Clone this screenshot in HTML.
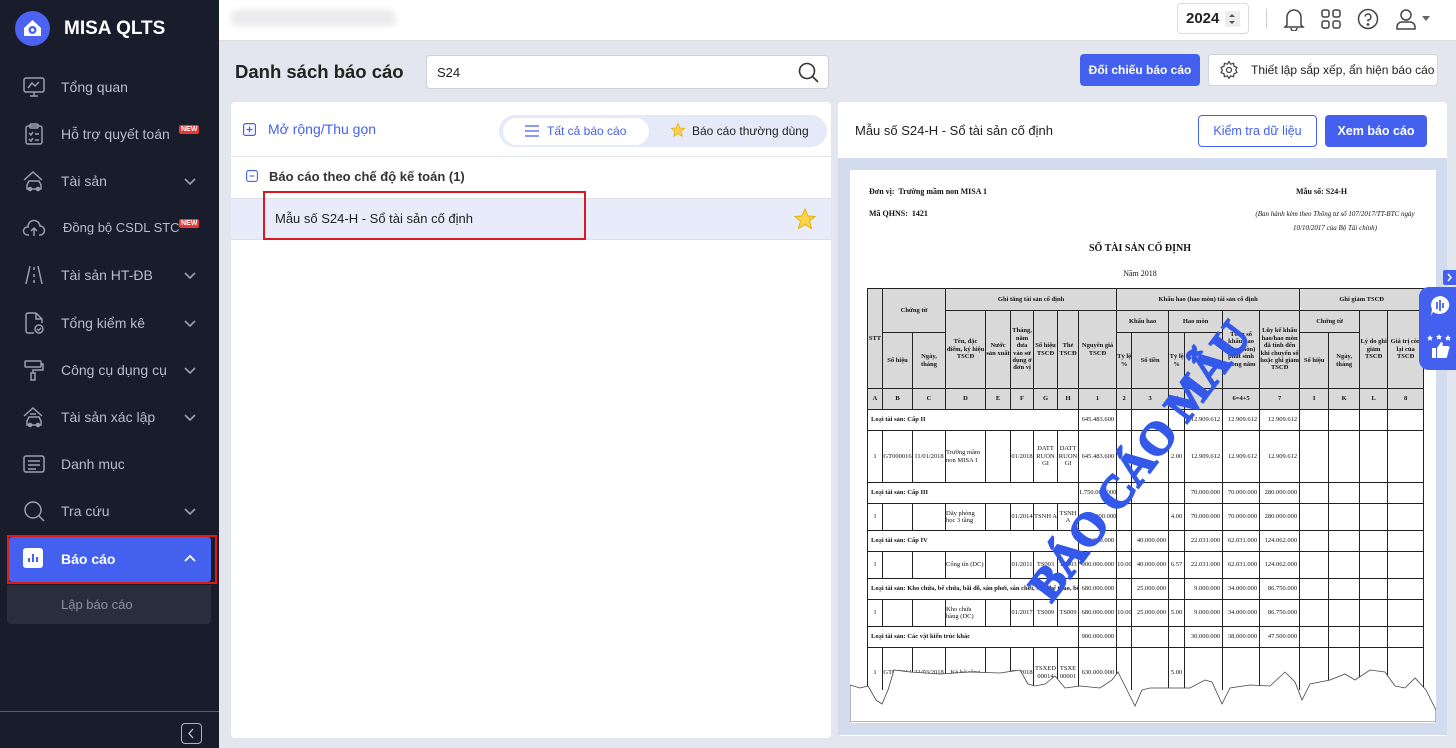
<!DOCTYPE html>
<html><head><meta charset="utf-8">
<style>
*{box-sizing:border-box;margin:0;padding:0}
body{width:1456px;height:748px;overflow:hidden;background:#e3e6ee;font-family:"Liberation Sans",sans-serif;position:relative}
.abs{position:absolute}
#side{left:0;top:0;width:219px;height:748px;background:#181c2b}
.mi{position:absolute;left:0;width:219px;height:40px;color:#b9bdc7;font-size:14px}
.mi .t{position:absolute;left:61px;top:12px;white-space:nowrap}
.mi svg.ic{position:absolute;left:22px;top:8px}
.mi .ch{position:absolute;left:184px;top:14px}
.new{position:absolute;background:#e5393b;color:#fff;font-size:7px;font-weight:bold;padding:1px 2px;border-radius:2px}
#top{left:219px;top:0;width:1237px;height:41px;background:#fff;border-bottom:1px solid #e0e0e0}
.btn{position:absolute;font-size:13px;border-radius:4px;text-align:center;white-space:nowrap}
.doc{font-family:"Liberation Serif",serif;color:#111}
table.d{border-collapse:collapse;table-layout:fixed;font-family:"Liberation Serif",serif;font-size:6.5px;color:#111}
table.d td{border:1px solid #222;text-align:center;vertical-align:middle;line-height:1.15;overflow:hidden;padding:0}
table.d tr.h td{background:#d9d9d9;font-weight:bold}
table.d td.l{text-align:left;padding-left:3px;font-weight:bold;white-space:nowrap}
table.d td.r{text-align:right;padding-right:2px}
</style></head><body>

<!-- SIDEBAR -->
<div id="side" class="abs">
  <div class="abs" style="left:15px;top:11px;width:35px;height:35px;border-radius:50%;background:#4b63f0"></div>
  <svg class="abs" style="left:15px;top:11px" width="35" height="35" viewBox="0 0 35 35"><path d="M9 17 L17.5 9 L26 17 V25 H9 Z" fill="#fff"/><circle cx="17.5" cy="19" r="4" fill="#4b63f0"/><circle cx="17.5" cy="19" r="1.6" fill="#fff"/></svg>
  <div class="abs" style="left:64px;top:18px;color:#fff;font-weight:bold;font-size:19px">MISA QLTS</div>

  <div class="mi" style="top:67px"><svg class="ic" width="24" height="24" viewBox="0 0 24 24" fill="none" stroke="#9ba0ab" stroke-width="1.5"><rect x="2" y="3" width="20" height="14" rx="2"/><path d="M6 13 L10 8 L13 11 L17 7 M12 17 V21 M8 21 H16"/></svg><span class="t">Tổng quan</span></div>
  <div class="mi" style="top:114px"><svg class="ic" width="24" height="24" viewBox="0 0 24 24" fill="none" stroke="#9ba0ab" stroke-width="1.5"><rect x="4" y="4" width="16" height="18" rx="2"/><rect x="8" y="2" width="8" height="4" rx="1"/><path d="M7 11 L9 13 L11 10 M13 12 H17 M7 17 L9 19 L11 16 M13 18 H17"/></svg><span class="t">Hỗ trợ quyết toán</span><span class="new" style="left:179px;top:11px">NEW</span></div>
  <div class="mi" style="top:161px"><svg class="ic" width="24" height="24" viewBox="0 0 24 24" fill="none" stroke="#9ba0ab" stroke-width="1.5"><path d="M2 11 L11 3 L20 11 M5 16 L7 12 H17 L19 16 V20 H5 Z"/><circle cx="8" cy="20" r="1.5"/><circle cx="16" cy="20" r="1.5"/></svg><span class="t">Tài sản</span><svg class="ch" width="12" height="12" viewBox="0 0 12 12"><path d="M1 4 L6 9 L11 4" fill="none" stroke="#9ba0ab" stroke-width="1.6"/></svg></div>
  <div class="mi" style="top:208px"><svg class="ic" width="24" height="24" viewBox="0 0 24 24" fill="none" stroke="#9ba0ab" stroke-width="1.5"><path d="M7 19 H5 A4 4 0 0 1 6 11 A6 6 0 0 1 18 10 A4.5 4.5 0 0 1 18 19 H17 M12 20 V12 M9 15 L12 12 L15 15"/></svg><span class="t" style="left:63px;font-size:13px">Đồng bộ CSDL STC</span><span class="new" style="left:179px;top:11px">NEW</span></div>
  <div class="mi" style="top:255px"><svg class="ic" width="24" height="24" viewBox="0 0 24 24" fill="none" stroke="#9ba0ab" stroke-width="1.5"><path d="M8 3 L4 21 M16 3 L20 21 M12 4 V7 M12 11 V14 M12 17 V20"/></svg><span class="t">Tài sản HT-ĐB</span><svg class="ch" width="12" height="12" viewBox="0 0 12 12"><path d="M1 4 L6 9 L11 4" fill="none" stroke="#9ba0ab" stroke-width="1.6"/></svg></div>
  <div class="mi" style="top:303px"><svg class="ic" width="24" height="24" viewBox="0 0 24 24" fill="none" stroke="#9ba0ab" stroke-width="1.5"><path d="M14 2 H6 A2 2 0 0 0 4 4 V20 A2 2 0 0 0 6 22 H12 M14 2 L20 8 V12 M14 2 V8 H20"/><circle cx="17" cy="18" r="4"/><path d="M15 18 L16.5 19.5 L19 17"/></svg><span class="t">Tổng kiểm kê</span><svg class="ch" width="12" height="12" viewBox="0 0 12 12"><path d="M1 4 L6 9 L11 4" fill="none" stroke="#9ba0ab" stroke-width="1.6"/></svg></div>
  <div class="mi" style="top:350px"><svg class="ic" width="24" height="24" viewBox="0 0 24 24" fill="none" stroke="#9ba0ab" stroke-width="1.5"><rect x="3" y="3" width="16" height="6" rx="1"/><path d="M19 6 H21 V12 H11 V15 M9 15 H13 V22 H9 Z"/></svg><span class="t">Công cụ dụng cụ</span><svg class="ch" width="12" height="12" viewBox="0 0 12 12"><path d="M1 4 L6 9 L11 4" fill="none" stroke="#9ba0ab" stroke-width="1.6"/></svg></div>
  <div class="mi" style="top:397px"><svg class="ic" width="24" height="24" viewBox="0 0 24 24" fill="none" stroke="#9ba0ab" stroke-width="1.5"><path d="M2 11 L11 3 L20 11 M5 16 L7 12 H17 L19 16 V20 H5 Z M8 9 H14"/><circle cx="8" cy="20" r="1.5"/><circle cx="16" cy="20" r="1.5"/></svg><span class="t">Tài sản xác lập</span><svg class="ch" width="12" height="12" viewBox="0 0 12 12"><path d="M1 4 L6 9 L11 4" fill="none" stroke="#9ba0ab" stroke-width="1.6"/></svg></div>
  <div class="mi" style="top:444px"><svg class="ic" width="24" height="24" viewBox="0 0 24 24" fill="none" stroke="#9ba0ab" stroke-width="1.5"><rect x="2" y="4" width="20" height="16" rx="2"/><path d="M6 9 H18 M6 13 H18 M6 17 H14"/></svg><span class="t">Danh mục</span></div>
  <div class="mi" style="top:491px"><svg class="ic" width="24" height="24" viewBox="0 0 24 24" fill="none" stroke="#9ba0ab" stroke-width="1.5"><circle cx="11" cy="11" r="8"/><path d="M17 17 L22 22"/></svg><span class="t">Tra cứu</span><svg class="ch" width="12" height="12" viewBox="0 0 12 12"><path d="M1 4 L6 9 L11 4" fill="none" stroke="#9ba0ab" stroke-width="1.6"/></svg></div>

  <div class="abs" style="left:7px;top:535px;width:210px;height:49px;border:2px solid #e0191f"></div>
  <div class="abs" style="left:9px;top:537px;width:202px;height:45px;background:#4361ee;border-radius:3px"></div>
  <svg class="abs" style="left:23px;top:548px" width="20" height="20" viewBox="0 0 20 20"><rect width="20" height="20" rx="3" fill="#fff"/><path d="M6 14 V10 M10 14 V6 M14 14 V9" stroke="#4361ee" stroke-width="2"/></svg>
  <div class="abs" style="left:61px;top:551px;color:#fff;font-weight:bold;font-size:14px">Báo cáo</div>
  <svg class="abs" style="left:184px;top:553px" width="12" height="12" viewBox="0 0 12 12"><path d="M1 8 L6 3 L11 8" fill="none" stroke="#fff" stroke-width="1.8"/></svg>
  <div class="abs" style="left:7px;top:585px;width:204px;height:39px;background:#2a2e3c;border-radius:0 0 4px 4px"></div>
  <div class="abs" style="left:61px;top:597px;color:#8d929c;font-size:13px">Lập báo cáo</div>
  <div class="abs" style="left:0;top:711px;width:219px;height:1px;background:#5a5e69"></div>
  <div class="abs" style="left:181px;top:723px;width:21px;height:21px;border:1.5px solid #b0b3ba;border-radius:4px"></div>
  <svg class="abs" style="left:181px;top:723px" width="21" height="21" viewBox="0 0 21 21"><path d="M12 6 L8 10.5 L12 15" fill="none" stroke="#c8cad0" stroke-width="1.3"/></svg>
</div>

<!-- TOP BAR -->
<div id="top" class="abs">
  <div class="abs" style="left:12px;top:10px;width:165px;height:16px;background:#ebebed;border-radius:6px;filter:blur(3px)"></div>
  <div class="abs" style="left:958px;top:3px;width:72px;height:31px;border:1px solid #dcdcdc;border-radius:4px"></div>
  <div class="abs" style="left:967px;top:10px;font-size:15px;font-weight:bold;color:#222">2024</div>
  <div class="abs" style="left:1006px;top:11px;width:15px;height:16px;background:#eee"></div>
  <svg class="abs" style="left:1008px;top:12px" width="10" height="14" viewBox="0 0 10 14"><path d="M2 5 L5 2 L8 5 Z M2 9 L5 12 L8 9 Z" fill="#555"/></svg>
  <div class="abs" style="left:1047px;top:9px;width:1px;height:20px;background:#ccc"></div>
  <svg class="abs" style="left:1064px;top:7px" width="22" height="24" viewBox="0 0 22 24" fill="none" stroke="#444" stroke-width="1.5"><path d="M4 18 V10 A7 7 0 0 1 18 10 V18 L20 20 H2 Z M8 21 A3 3 0 0 0 14 21"/></svg>
  <svg class="abs" style="left:1101px;top:8px" width="22" height="22" viewBox="0 0 22 22" fill="none" stroke="#444" stroke-width="1.5"><rect x="2" y="2" width="7" height="7" rx="2"/><rect x="13" y="2" width="7" height="7" rx="2"/><rect x="2" y="13" width="7" height="7" rx="2"/><rect x="13" y="13" width="7" height="7" rx="2"/></svg>
  <svg class="abs" style="left:1138px;top:8px" width="22" height="22" viewBox="0 0 22 22" fill="none" stroke="#444" stroke-width="1.5"><circle cx="11" cy="11" r="9.5"/><path d="M8 8.5 A3 3 0 1 1 11 12 V13.5"/><circle cx="11" cy="16.5" r=".6" fill="#444"/></svg>
  <svg class="abs" style="left:1176px;top:8px" width="22" height="22" viewBox="0 0 22 22" fill="none" stroke="#444" stroke-width="1.5"><circle cx="11" cy="7" r="5"/><path d="M2 21 V19 A5 5 0 0 1 7 14 H15 A5 5 0 0 1 20 19 V21 Z"/></svg>
  <svg class="abs" style="left:1203px;top:16px" width="8" height="5" viewBox="0 0 8 5"><path d="M0 0 H8 L4 5 Z" fill="#666"/></svg>
</div>

<!-- TITLE ROW -->
<div class="abs" style="left:235px;top:61px;font-size:18.5px;font-weight:bold;color:#222">Danh sách báo cáo</div>
<div class="abs" style="left:426px;top:55px;width:403px;height:34px;background:#fff;border:1px solid #cfd2d9;border-radius:4px"></div>
<div class="abs" style="left:437px;top:65px;font-size:13px;color:#222">S24</div>
<svg class="abs" style="left:798px;top:62px" width="21" height="21" viewBox="0 0 21 21" fill="none" stroke="#333" stroke-width="1.6"><circle cx="9" cy="9" r="7.5"/><path d="M14.5 14.5 L20 20"/></svg>
<div class="btn" style="left:1080px;top:54px;width:120px;height:32px;background:#4361ee;color:#fff;line-height:32px;font-size:12px;font-weight:bold">Đối chiếu báo cáo</div>
<div class="btn" style="left:1208px;top:54px;width:230px;height:32px;background:#fff;border:1px solid #d3d6dc;color:#222;line-height:30px;font-size:12px;text-align:left;padding-left:42px">Thiết lập sắp xếp, ẩn hiện báo cáo</div>
<svg class="abs" style="left:1219px;top:60px" width="20" height="20" viewBox="0 0 24 24" fill="none" stroke="#444" stroke-width="1.5"><circle cx="12" cy="12" r="3"/><path d="M12 2 L14 5 L17.5 4 L18 7.5 L21.5 9 L20 12 L21.5 15 L18 16.5 L17.5 20 L14 19 L12 22 L10 19 L6.5 20 L6 16.5 L2.5 15 L4 12 L2.5 9 L6 7.5 L6.5 4 L10 5 Z"/></svg>

<!-- LEFT PANEL -->
<div class="abs" style="left:231px;top:102px;width:600px;height:636px;background:#fff;border-radius:4px"></div>
<svg class="abs" style="left:243px;top:123px" width="13" height="13" viewBox="0 0 13 13" fill="none" stroke="#4361ee" stroke-width="1.2"><rect x=".6" y=".6" width="11.8" height="11.8" rx="2"/><path d="M3.5 6.5 H9.5 M6.5 3.5 V9.5"/></svg>
<div class="abs" style="left:268px;top:121px;font-size:14px;color:#4361ee">Mở rộng/Thu gọn</div>
<div class="abs" style="left:499px;top:115px;width:328px;height:32px;background:#e6e9f8;border-radius:16px"></div>
<div class="abs" style="left:503px;top:118px;width:146px;height:27px;background:#fff;border-radius:14px"></div>
<svg class="abs" style="left:525px;top:125px" width="14" height="12" viewBox="0 0 14 12" stroke="#4361ee" stroke-width="1.3"><path d="M0 1 H14 M0 6 H14 M0 11 H14"/></svg>
<div class="abs" style="left:547px;top:124px;font-size:12px;color:#4361ee">Tất cả báo cáo</div>
<svg class="abs" style="left:670px;top:122px" width="16" height="16" viewBox="0 0 24 24"><path d="M12 2 L15 9 L22 9.5 L16.5 14 L18.5 21.5 L12 17.5 L5.5 21.5 L7.5 14 L2 9.5 L9 9 Z" fill="#fcd34d" stroke="#e5a800" stroke-width="1"/></svg>
<div class="abs" style="left:692px;top:124px;font-size:12px;color:#222">Báo cáo thường dùng</div>
<div class="abs" style="left:231px;top:156px;width:600px;height:1px;background:#e3e4e8"></div>
<svg class="abs" style="left:246px;top:170px" width="12" height="12" viewBox="0 0 12 12" fill="none" stroke="#4361ee" stroke-width="1.1"><rect x=".6" y=".6" width="10.8" height="10.8" rx="2"/><path d="M3.5 6 H8.5"/></svg>
<div class="abs" style="left:269px;top:169px;font-size:13px;font-weight:bold;color:#333">Báo cáo theo chế độ kế toán (1)</div>
<div class="abs" style="left:231px;top:198px;width:600px;height:42px;background:#e8ebfa;border-top:1px solid #dcdfe8;border-bottom:1px solid #dcdfe8"></div>
<div class="abs" style="left:263px;top:191px;width:323px;height:49px;border:2px solid #d9191f"></div>
<div class="abs" style="left:275px;top:211px;font-size:13px;color:#222">Mẫu số S24-H - Sổ tài sản cố định</div>
<svg class="abs" style="left:793px;top:207px" width="24" height="24" viewBox="0 0 24 24"><path d="M12 2 L15 9 L22 9.5 L16.5 14 L18.5 21.5 L12 17.5 L5.5 21.5 L7.5 14 L2 9.5 L9 9 Z" fill="#fcd34d" stroke="#e5b000" stroke-width="1"/></svg>

<!-- RIGHT PANEL -->
<div class="abs" style="left:838px;top:102px;width:609px;height:634px;background:#fff;border-radius:4px"></div>
<div class="abs" style="left:855px;top:123px;font-size:13px;color:#222">Mẫu số S24-H - Sổ tài sản cố định</div>
<div class="btn" style="left:1198px;top:115px;width:119px;height:32px;border:1px solid #4361ee;color:#4361ee;line-height:30px;font-size:12.5px">Kiểm tra dữ liệu</div>
<div class="btn" style="left:1325px;top:115px;width:102px;height:32px;background:#4361ee;color:#fff;line-height:32px;font-size:12.5px;font-weight:bold">Xem báo cáo</div>
<div class="abs" style="left:838px;top:158px;width:609px;height:577px;background:#d3dbee"></div>
<div class="abs" style="left:850px;top:170px;width:586px;height:553px;background:#fff"></div>

<div class="abs doc" style="left:869px;top:187px;font-size:8px;font-weight:bold">Đơn vị:&nbsp; Trường mầm non MISA 1</div>
<div class="abs doc" style="left:869px;top:209px;font-size:8px;font-weight:bold">Mã QHNS:&nbsp; 1421</div>
<div class="abs doc" style="left:1296px;top:187px;font-size:8px;font-weight:bold">Mẫu số: S24-H</div>
<div class="abs doc" style="left:1250px;top:207px;width:170px;font-size:7px;font-style:italic;text-align:center;line-height:14px">(Ban hành kèm theo Thông tư số 107/2017/TT-BTC ngày 10/10/2017 của Bộ Tài chính)</div>
<div class="abs doc" style="left:1040px;top:243px;width:200px;text-align:center;font-size:10px;font-weight:bold">SỔ TÀI SẢN CỐ ĐỊNH</div>
<div class="abs doc" style="left:1090px;top:269px;width:100px;text-align:center;font-size:8px">Năm 2018</div>

<div class="abs" style="left:867px;top:288px;width:557px;height:402px;overflow:hidden">
<table class="d" style="width:556px">
<colgroup><col style="width:15px"><col style="width:30px"><col style="width:33px"><col style="width:40px"><col style="width:25px"><col style="width:23px"><col style="width:24px"><col style="width:21px"><col style="width:38px"><col style="width:15px"><col style="width:37px"><col style="width:16px"><col style="width:38px"><col style="width:37px"><col style="width:40px"><col style="width:29px"><col style="width:31px"><col style="width:28px"><col style="width:36px"></colgroup>
<tr class="h" style="height:22px"><td rowspan="3">STT</td><td colspan="2" rowspan="2">Chứng từ</td><td colspan="6">Ghi tăng tài sản cố định</td><td colspan="6">Khấu hao (hao mòn) tài sản cố định</td><td colspan="4">Ghi giảm TSCĐ</td></tr>
<tr class="h" style="height:22px"><td rowspan="2">Tên, đặc điểm, ký hiệu TSCĐ</td><td rowspan="2">Nước sản xuất</td><td rowspan="2">Tháng, năm đưa vào sử dụng ở đơn vị</td><td rowspan="2">Số hiệu TSCĐ</td><td rowspan="2">Thẻ TSCĐ</td><td rowspan="2">Nguyên giá TSCĐ</td><td colspan="2">Khấu hao</td><td colspan="2">Hao mòn</td><td rowspan="2">Tổng số khấu hao (hao mòn) phát sinh trong năm</td><td rowspan="2">Lũy kế khấu hao/hao mòn đã tính đến khi chuyển sổ hoặc ghi giảm TSCĐ</td><td colspan="2">Chứng từ</td><td rowspan="2">Lý do ghi giảm TSCĐ</td><td rowspan="2">Giá trị còn lại của TSCĐ</td></tr>
<tr class="h" style="height:56px"><td>Số hiệu</td><td>Ngày, tháng</td><td>Tỷ lệ %</td><td>Số tiền</td><td>Tỷ lệ %</td><td>Số tiền</td><td>Số hiệu</td><td>Ngày, tháng</td></tr>
<tr class="h" style="height:21px"><td>A</td><td>B</td><td>C</td><td>D</td><td>E</td><td>F</td><td>G</td><td>H</td><td>1</td><td>2</td><td>3</td><td>4</td><td>5</td><td>6=4+5</td><td>7</td><td>I</td><td>K</td><td>L</td><td>8</td></tr>
<tr style="height:21px"><td colspan="8" class="l">Loại tài sản: Cấp II</td><td class="r">645.483.600</td><td></td><td></td><td></td><td class="r">12.909.612</td><td class="r">12.909.612</td><td class="r">12.909.612</td><td></td><td></td><td></td><td></td></tr>
<tr style="height:52px"><td>1</td><td>GT000016</td><td>11/01/2018</td><td style="text-align:left">Trường mầm non MISA 1</td><td></td><td>01/2018</td><td>DATT RUON GI</td><td>DATT RUON GI</td><td class="r">645.483.600</td><td></td><td></td><td>2.00</td><td class="r">12.909.612</td><td class="r">12.909.612</td><td class="r">12.909.612</td><td></td><td></td><td></td><td></td></tr>
<tr style="height:21px"><td colspan="8" class="l">Loại tài sản: Cấp III</td><td class="r">1.750.000.000</td><td></td><td></td><td></td><td class="r">70.000.000</td><td class="r">70.000.000</td><td class="r">280.000.000</td><td></td><td></td><td></td><td></td></tr>
<tr style="height:27px"><td>1</td><td></td><td></td><td style="text-align:left">Dãy phòng học 3 tầng</td><td></td><td>01/2014</td><td>TSNH A</td><td>TSNH A</td><td class="r">1.750.000.000</td><td></td><td></td><td>4.00</td><td class="r">70.000.000</td><td class="r">70.000.000</td><td class="r">280.000.000</td><td></td><td></td><td></td><td></td></tr>
<tr style="height:21px"><td colspan="8" class="l">Loại tài sản: Cấp IV</td><td class="r">900.000.000</td><td></td><td class="r">40.000.000</td><td></td><td class="r">22.031.000</td><td class="r">62.031.000</td><td class="r">124.062.000</td><td></td><td></td><td></td><td></td></tr>
<tr style="height:27px"><td>1</td><td></td><td></td><td style="text-align:left">Cổng tín (DC)</td><td></td><td>01/2011</td><td>TS003</td><td>TS003</td><td class="r">900.000.000</td><td>10.00</td><td class="r">40.000.000</td><td>6.57</td><td class="r">22.031.000</td><td class="r">62.031.000</td><td class="r">124.062.000</td><td></td><td></td><td></td><td></td></tr>
<tr style="height:21px"><td colspan="8" class="l">Loại tài sản: Kho chứa, bể chứa, bãi đỗ, sân phơi, sân chơi, sân thể thao, bể bơi</td><td class="r">680.000.000</td><td></td><td class="r">25.000.000</td><td></td><td class="r">9.000.000</td><td class="r">34.000.000</td><td class="r">86.750.000</td><td></td><td></td><td></td><td></td></tr>
<tr style="height:27px"><td>1</td><td></td><td></td><td style="text-align:left">Kho chứa hàng (DC)</td><td></td><td>01/2017</td><td>TS009</td><td>TS009</td><td class="r">680.000.000</td><td>10.00</td><td class="r">25.000.000</td><td>5.00</td><td class="r">9.000.000</td><td class="r">34.000.000</td><td class="r">86.750.000</td><td></td><td></td><td></td><td></td></tr>
<tr style="height:21px"><td colspan="8" class="l">Loại tài sản: Các vật kiến trúc khác</td><td class="r">900.000.000</td><td></td><td></td><td></td><td class="r">30.000.000</td><td class="r">38.000.000</td><td class="r">47.500.000</td><td></td><td></td><td></td><td></td></tr>
<tr style="height:50px"><td>1</td><td>GT000014</td><td>31/03/2018</td><td>Kè bờ sông</td><td></td><td>03/2018</td><td>TSXED 00014</td><td>TSXE 00001</td><td class="r">630.000.000</td><td></td><td></td><td>5.00</td><td></td><td></td><td></td><td></td><td></td><td></td><td></td></tr>
</table>
</div>
<svg class="abs" style="left:850px;top:660px" width="586" height="62" viewBox="0 0 586 62">
<path d="M0 25 L10 28 L18 26 L26 40 L32 44 L38 30 L44 10 L60 12 L90 14 L120 12 L150 13 L170 10 L178 24 L185 26 L195 24 L205 16 L215 28 L230 26 L250 28 L262 20 L268 12 L275 26 L285 46 L292 30 L300 28 L320 28 L340 28 L355 20 L362 22 L372 44 L380 28 L400 25 L420 26 L435 12 L445 22 L452 40 L460 24 L470 22 L480 20 L495 14 L505 20 L520 10 L535 12 L545 26 L555 28 L565 18 L576 30 L586 50 L586 62 L0 62 Z" fill="#fff" stroke="#444" stroke-width=".8"/>
</svg>
<div class="abs" style="left:970px;top:434px;transform:rotate(-53deg);transform-origin:center;width:340px;height:54px;text-align:center;font-family:'Liberation Serif',serif;font-weight:bold;font-size:46px;line-height:54px;color:#3358ea;-webkit-text-stroke:2px #3358ea;white-space:nowrap">BÁO CÁO MẪU</div>

<!-- floating widget -->
<div class="abs" style="left:1443px;top:270px;width:13px;height:15px;background:#4361ee;border-radius:2px 0 0 2px"></div>
<svg class="abs" style="left:1445px;top:272px" width="9" height="11" viewBox="0 0 9 11"><path d="M3 2 L6 5.5 L3 9" fill="none" stroke="#fff" stroke-width="1.5"/></svg>
<div class="abs" style="left:1419px;top:287px;width:40px;height:83px;background:#4361ee;border-radius:10px 0 0 10px"></div>
<svg class="abs" style="left:1429px;top:295px" width="22" height="22" viewBox="0 0 22 22"><path d="M11 1 A10 9 0 1 1 4 17 L2 21 L3 14 A10 9 0 0 1 11 1 Z" fill="#fff"/><path d="M8 7 V14 M11 5 V16 M14 8 V13" stroke="#4361ee" stroke-width="1.8"/></svg>
<svg class="abs" style="left:1426px;top:334px" width="28" height="26" viewBox="0 0 28 26" fill="#fff"><path d="M4 1 L5 3 L7 3.3 L5.5 4.6 L6 6.8 L4 5.6 L2 6.8 L2.5 4.6 L1 3.3 L3 3 Z M13 0 L14 2 L16 2.3 L14.5 3.6 L15 5.8 L13 4.6 L11 5.8 L11.5 3.6 L10 2.3 L12 2 Z M22 1 L23 3 L25 3.3 L23.5 4.6 L24 6.8 L22 5.6 L20 6.8 L20.5 4.6 L19 3.3 L21 3 Z"/><rect x="6" y="14" width="4" height="10"/><path d="M11 14 L15 8 C17 8 17 10 16.5 12 H22 C23.5 12 24 14 23 15 L21 23 C20.5 24 20 24 19 24 H11 Z"/></svg>
</body></html>
